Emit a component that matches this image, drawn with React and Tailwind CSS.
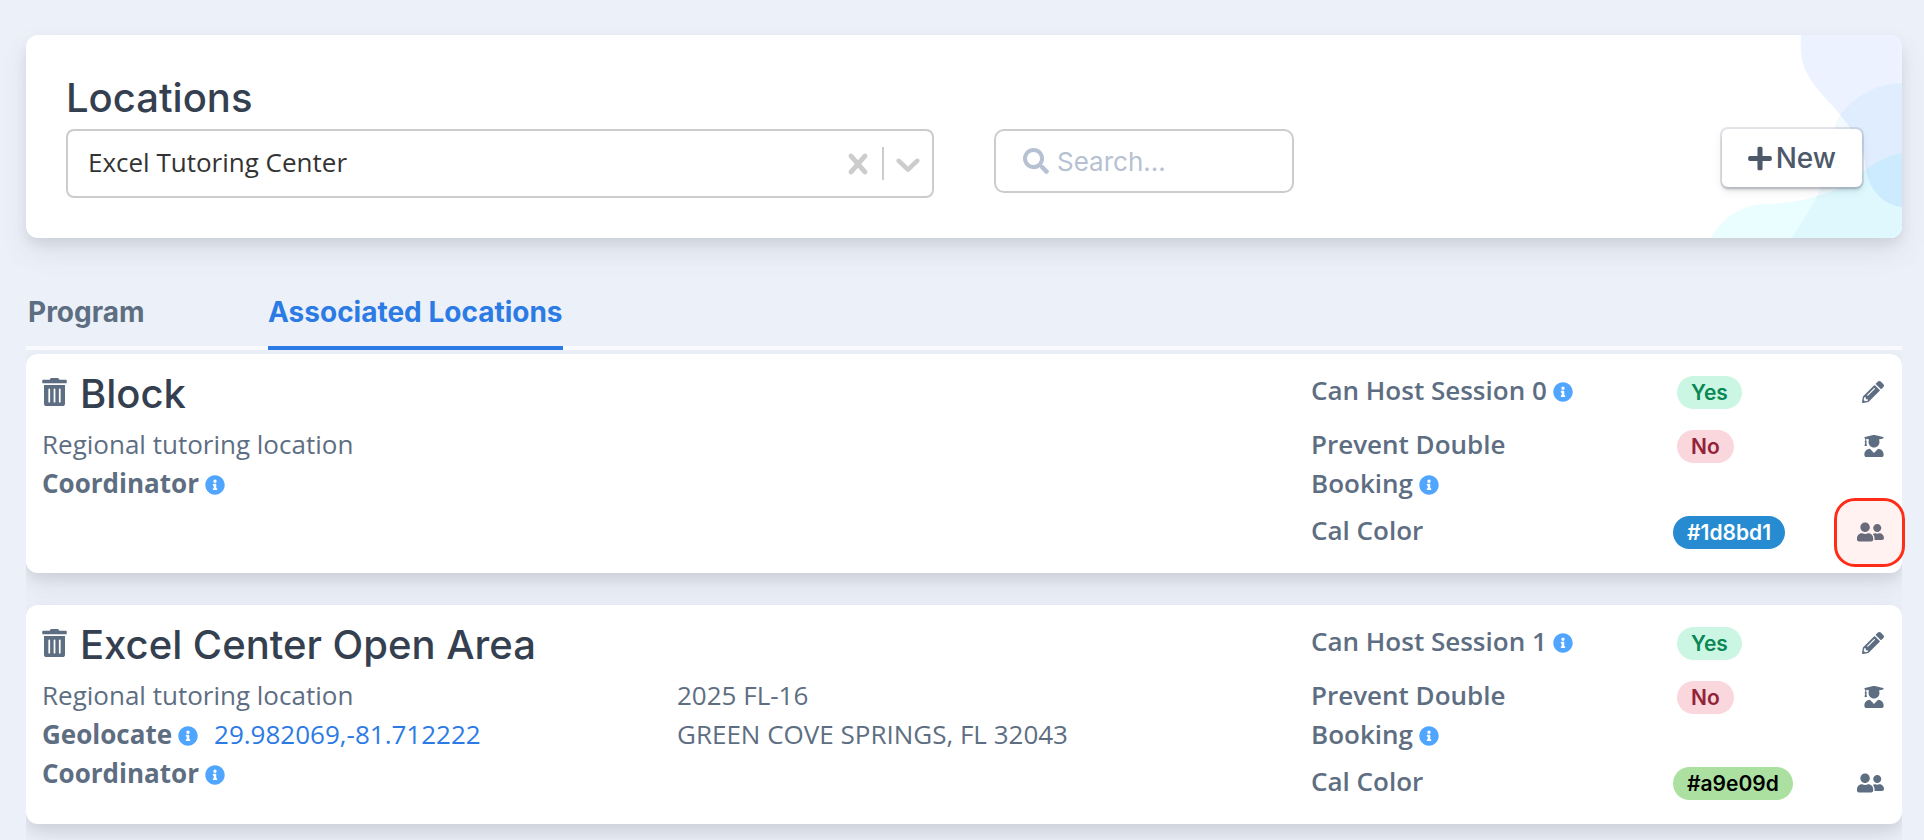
import { useState } from "react";
import {
  FaInfoCircle,
  FaPencilAlt,
  FaPlus,
  FaSearch,
  FaTrashAlt,
  FaUserFriends,
  FaUserGraduate,
} from "react-icons/fa";

const locations = [
  {
    name: "Block",
    description: "Regional tutoring location",
    session: 0,
    color: "#1d8bd1",
    colorClass: "bg-[#268bd0] text-white",
  },
  {
    name: "Excel Center Open Area",
    description: "Regional tutoring location",
    geolocate: "29.982069,-81.712222",
    address: ["2025 FL-16", "GREEN COVE SPRINGS, FL 32043"],
    session: 1,
    color: "#a9e09d",
    colorClass: "bg-[#abe0a0] text-black",
  },
];

function Info() {
  return (
    <button type="button" aria-label="More information" className="ml-1.5 inline-block align-[-2px]">
      <FaInfoCircle className="block size-5 text-[#50a5ff]" />
    </button>
  );
}

function Badge({ className, children }) {
  return (
    <span
      className={`mt-[5px] inline-block rounded-full px-3.5 font-['Inter',sans-serif] text-[21px] leading-[33px] font-semibold ${className}`}
    >
      {children}
    </span>
  );
}

function DetailRow({ label, badge, action, icon }) {
  return (
    <div className="grid grid-cols-[362fr_211fr]">
      <div className="max-w-[280px] font-semibold">{label}</div>
      <div className="flex items-start justify-between">
        {badge}
        <button type="button" aria-label={action} className="flex h-[41px] items-center">
          {icon}
        </button>
      </div>
    </div>
  );
}

function LocationCard({ item }) {
  return (
    <article className="grid grid-cols-[635fr_634fr_573fr] rounded-xl bg-white pt-[17px] pr-[18px] pb-[21px] pl-4 shadow-[0_14px_28px_rgba(65,69,88,0.1),0_6px_12px_rgba(0,0,0,0.07)]">
      <div>
        <div className="mb-2 flex items-center gap-[13px]">
          <button type="button" aria-label={`Delete ${item.name}`} className="pb-1">
            <FaTrashAlt className="block h-7 w-[25px]" />
          </button>
          <h2 className="font-['Inter',sans-serif] text-[40px] leading-[46px] font-medium whitespace-nowrap text-[#344050]">
            {item.name}
          </h2>
        </div>
        <p>{item.description}</p>
        {item.geolocate && (
          <p>
            <strong className="font-bold">Geolocate</strong>
            <Info />
            <a href="#map" className="ml-4 text-[#2c7be5]">
              {item.geolocate}
            </a>
          </p>
        )}
        <p>
          <strong className="font-bold">Coordinator</strong>
          <Info />
        </p>
      </div>
      <address className="pt-[54px] not-italic">
        {item.address?.map((line) => (
          <div key={line}>{line}</div>
        ))}
      </address>
      <div>
        <DetailRow
          label={
            <>
              Can Host Session {item.session}
              <Info />
            </>
          }
          badge={<Badge className="ml-1 bg-[#ccf6e4] text-[#0a8853]">Yes</Badge>}
          action="Edit location"
          icon={<FaPencilAlt className="size-[22px]" />}
        />
        <div className="mt-[13px] mb-2">
          <DetailRow
            label={
              <>
                Prevent Double Booking
                <Info />
              </>
            }
            badge={<Badge className="ml-1 bg-[#fad7dd] text-[#932338]">No</Badge>}
            action="Tutors"
            icon={<FaUserGraduate className="h-[22px] w-5" />}
          />
        </div>
        <DetailRow
          label="Cal Color"
          badge={<Badge className={item.colorClass}>{item.color}</Badge>}
          action="Coordinators"
          icon={<FaUserFriends className="h-[22px] w-[27px]" />}
        />
      </div>
    </article>
  );
}

function HeaderArt() {
  return (
    <svg
      viewBox="0 0 192 203"
      aria-hidden="true"
      className="pointer-events-none absolute top-0 right-0 h-[203px] w-48"
    >
      <path
        className="mix-blend-multiply"
        fill="#ecf2ff"
        d="M91 0C90 20 92 30 98 40C106 56 128 74 140 93C148 105 153 114 155 128C157 153 172 170 192 172V0Z"
      />
      <path
        className="mix-blend-multiply"
        fill="#f2fafe"
        d="M192 48C167 48 144 62 131 79C123 90 122 103 120 117C117 138 111 155 101 172C95 182 89 192 82 203H192Z"
      />
      <path
        className="mix-blend-multiply"
        fill="#eafdff"
        d="M1 203C13 181 32 170 57 169C84 168 110 163 133 151C150 141 166 122 192 118V203Z"
      />
    </svg>
  );
}

function Header() {
  const [center, setCenter] = useState("Excel Tutoring Center");
  return (
    <header className="relative rounded-xl bg-white p-10 font-['Inter',sans-serif] shadow-[0_14px_28px_rgba(65,69,88,0.1),0_6px_12px_rgba(0,0,0,0.07)]">
      <div className="absolute inset-0 isolate overflow-hidden rounded-xl">
        <HeaderArt />
      </div>
      <div className="relative">
        <h1 className="mb-2 text-[40px] leading-[46px] font-medium text-[#344050]">Locations</h1>
        <div className="grid grid-cols-[868fr_300fr_508fr] items-start gap-[60px]">
          <div className="relative flex h-[69px] items-center gap-1 rounded-lg border-2 border-[#ccc] bg-white pr-1 text-[#ccc]">
            <select
              aria-label="Program location"
              value={center}
              onChange={(e) => setCenter(e.target.value)}
              className="h-full min-w-0 flex-1 appearance-none pb-0.5 pl-5 font-['Open_Sans',sans-serif] text-[26px] text-[#333] outline-none"
            >
              <option value="" />
              <option>Excel Tutoring Center</option>
            </select>
            <button type="button" aria-label="Clear" onClick={() => setCenter("")}>
              <svg viewBox="0 0 20 20" className="block size-10 fill-current">
                <path d="M14.348 14.849c-0.469 0.469-1.229 0.469-1.697 0l-2.651-3.030-2.651 3.029c-0.469 0.469-1.229 0.469-1.697 0-0.469-0.469-0.469-1.229 0-1.697l2.758-3.15-2.759-3.152c-0.469-0.469-0.469-1.228 0-1.697s1.228-0.469 1.697 0l2.652 3.031 2.651-3.031c0.469-0.469 1.228-0.469 1.697 0s0.469 1.229 0 1.697l-2.758 3.152 2.758 3.15c0.469 0.469 0.469 1.229 0 1.698z" />
              </svg>
            </button>
            <span className="h-[33px] w-0.5 bg-[#ccc]" />
            <svg viewBox="0 0 20 20" aria-hidden="true" className="pointer-events-none block size-10 fill-current">
              <path d="M4.516 7.548c0.436-0.446 1.043-0.481 1.576 0l3.908 3.747 3.908-3.747c0.533-0.481 1.141-0.446 1.574 0 0.436 0.445 0.408 1.197 0 1.615-0.406 0.418-4.695 4.502-4.695 4.502-0.217 0.223-0.502 0.335-0.787 0.335s-0.57-0.112-0.789-0.335c0 0-4.287-4.084-4.695-4.502s-0.436-1.17 0-1.615z" />
            </svg>
          </div>
          <label className="flex h-16 items-center gap-2 rounded-[10px] border-2 border-[#ccc] bg-white px-[27px] text-[#b6c1d2]">
            <FaSearch className="size-[26px] shrink-0" />
            <input
              type="search"
              aria-label="Search"
              placeholder="Search..."
              className="w-full min-w-0 text-[26px] text-[#344050] outline-none placeholder:text-[#b6c1d2]"
            />
          </label>
          <button
            type="button"
            className="flex h-[58px] items-center gap-1 justify-self-end rounded-md bg-white px-[26px] text-[28px] font-medium text-[#4d5969] shadow-[0_0_0_2px_rgba(43,45,80,0.12),0_4px_10px_rgba(43,45,80,0.1),0_3px_3px_rgba(0,0,0,0.14)]"
          >
            <FaPlus className="h-[27px] w-6" />
            New
          </button>
        </div>
      </div>
    </header>
  );
}

export default function App() {
  return (
    <main className="min-h-screen bg-[#ecf1f9] px-[22px] pt-[35px] pl-[26px] font-['Open_Sans',sans-serif] text-[26px] leading-[39px] text-[#5e6e82]">
      <Header />
      <nav className="mt-[53px] flex border-b-4 border-[#f8fafd] font-['Inter',sans-serif] text-[28px] leading-[42px] font-bold">
        <button
          type="button"
          className="-mb-1 w-[242px] border-b-4 border-transparent pb-[13px] pl-0.5 text-left"
        >
          Program
        </button>
        <button
          type="button"
          aria-current="page"
          className="-mb-1 border-b-4 border-[#2c7be5] pb-[13px] text-[#2c7be5]"
        >
          Associated Locations
        </button>
      </nav>
      <section className="relative">
        <div className="flex flex-col gap-8 overflow-hidden pt-1 pb-4">
          {locations.map((item) => (
            <LocationCard key={item.name} item={item} />
          ))}
        </div>
        <span className="pointer-events-none absolute top-[148px] -right-[3px] h-[69px] w-[71px] rounded-[21px] border-[3px] border-[#ff2d17] bg-[#ff4a2a]/7" />
      </section>
    </main>
  );
}
